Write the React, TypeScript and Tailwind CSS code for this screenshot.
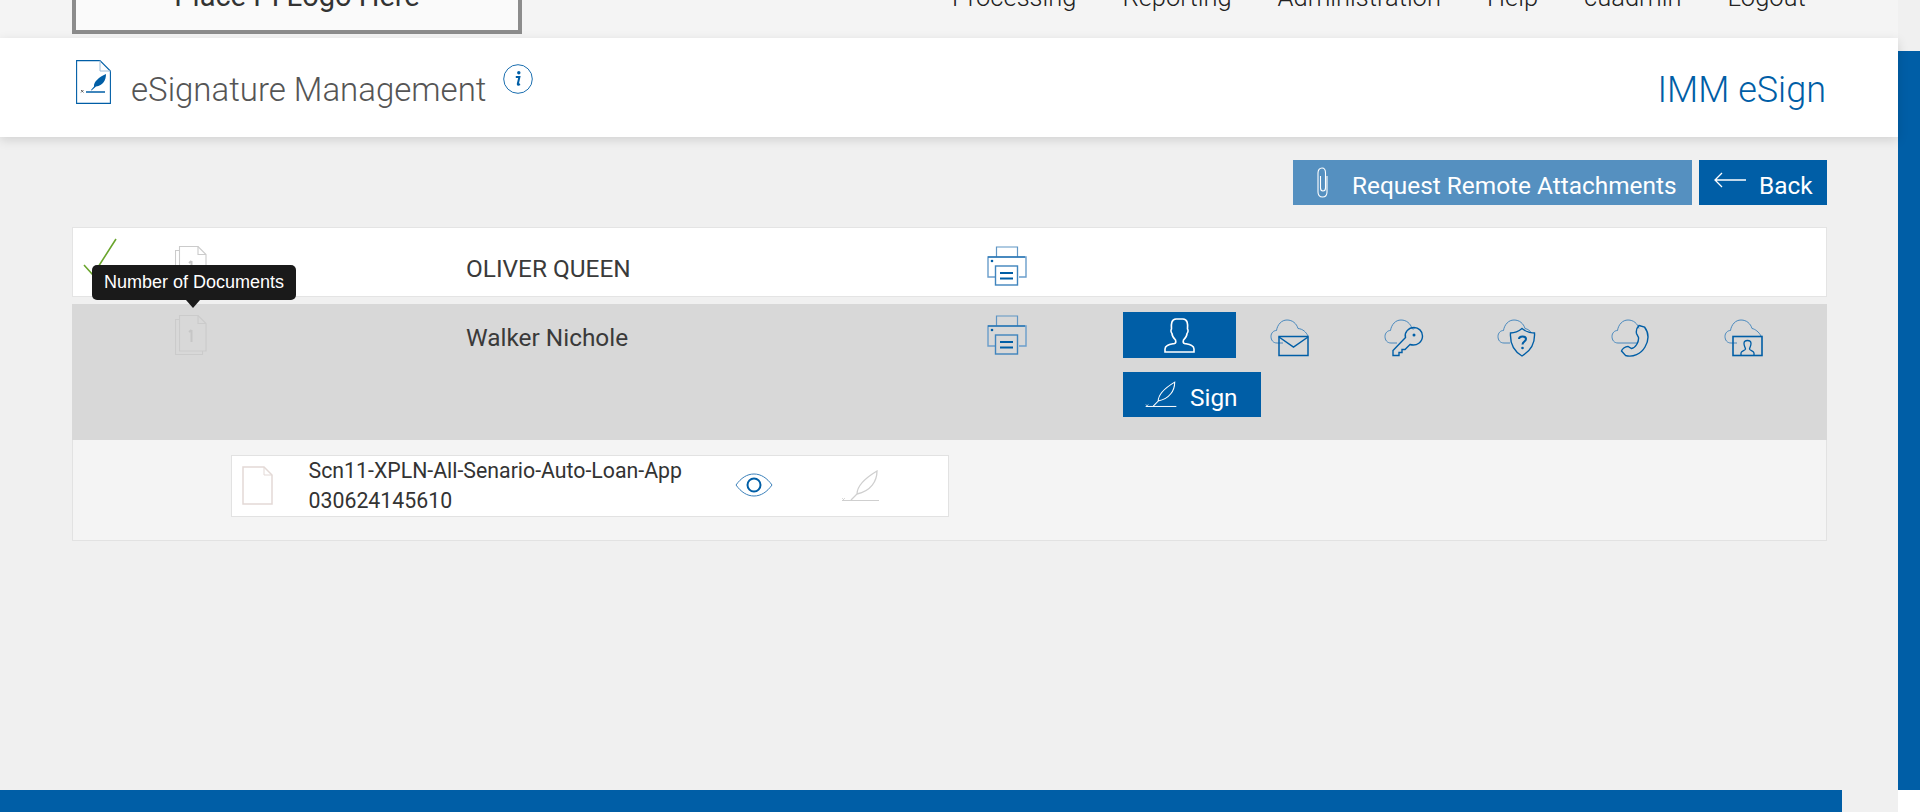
import React from 'react';

const BLUE = '#005ea6';

function PageIcon() {
  return (
    <svg width="35" height="44" viewBox="0 0 35 44" fill="none">
      <path d="M.6.600H24L34.400 11V43.400H.6Z" stroke={BLUE} strokeWidth="1.100" />
      <path d="M24 .6V11H34.400" stroke="#9dbcd8" strokeWidth="1" />
      <path d="M10 32H29" stroke={BLUE} strokeWidth="1.500" />
      <path d="M5 30L7.500 32.500M7.500 30L5 32.500" stroke="#555" strokeWidth="0.9" />
      <path d="M15 30L18 26.500C17.500 22 23 17 30 14C30 20.500 27 25.500 20 26.500L15.500 30.500Z" fill={BLUE} />
    </svg>
  );
}

function InfoIcon() {
  return (
    <svg width="30" height="30" viewBox="0 0 30 30" fill="none">
      <circle cx="15" cy="15" r="14.3" stroke={BLUE} strokeWidth="0.9" />
      <circle cx="15.800" cy="8.800" r="1.700" fill={BLUE} />
      <path d="M12.800 13H16.400L14.800 20C14.700 20.800 15.400 21 17 20.200" stroke={BLUE} strokeWidth="2" />
    </svg>
  );
}

function Clip() {
  return (
    <svg width="13" height="31" viewBox="0 0 13 31" fill="none" stroke="#fff" strokeWidth="1.100">
      <path d="M11 9V25C11 28 9.500 30 6.500 30C3.500 30 2 28 2 25V6C2 3 3.500 1 6 1C8.500 1 9.500 3 9.500 6V21C9.500 23 8.500 24 7 24C5.500 24 4.500 23 4.500 21V9" />
    </svg>
  );
}

function Arrow() {
  return (
    <svg width="32" height="16" viewBox="0 0 32 16" fill="none" stroke="#fff" strokeWidth="1.300">
      <path d="M1 8H32M8 1L1 8L8 15" />
    </svg>
  );
}

function DocStack() {
  return (
    <svg width="32" height="40" viewBox="0 0 32 40" fill="none" stroke="#cbcbcb" strokeWidth="1.100">
      <path d="M4.500 .5H23L31 8.500V36H4.500Z" />
      <path d="M23 .5V8.500H31" />
      <path d="M4.500 4.500H.5V39.500H27.500V36" />
      <path d="M16.500 15V27M14 17L16.500 15" strokeWidth="2" stroke="#c6c6c6" />
    </svg>
  );
}

function Printer() {
  return (
    <svg width="40" height="40" viewBox="0 0 40 40" fill="none">
      <path d="M9.500 11V1H30.500V11" stroke="#5f95c4" strokeWidth="1.200" />
      <path d="M8 31H1V11H39V31H32" stroke="#6a9dcb" strokeWidth="1.400" />
      <path d="M1 11H38" stroke={BLUE} strokeWidth="1.200" />
      <rect x="8.500" y="20" width="22" height="19" stroke="#3f84bd" strokeWidth="1.400" fill="none" />
      <path d="M13 27H26M13 32.500H26" stroke={BLUE} strokeWidth="2" />
      <circle cx="5" cy="15" r="1.300" fill={BLUE} />
    </svg>
  );
}

function Person() {
  return (
    <svg width="31" height="35" viewBox="0 0 31 35" fill="none" stroke="currentColor" strokeWidth="1.600">
      <path d="M1 34V31C1 27 6 26.500 10.500 25.500C12 25 12 23.500 11.500 22C9.500 20 8 18 8 15.500C7 14.500 6.500 12 7.500 11C7 6 7.500 1 12 1H19C23.500 1 24 6 23.500 11C24.500 12 24 14.500 23 15.500C23 18 21.500 20 19.500 22C19 23.500 19 25 20.500 25.500C25 26.500 30 27 30 31V34Z" />
    </svg>
  );
}

const cloud = 'M13 24H7C3 24 1 21 1 17.500C1 14 3.500 11.500 6.500 11.500C7.500 5.500 11.500 1 17 1C22.500 1 26.500 4.500 28 9.500';

function CloudMail() {
  return (
    <svg width="40" height="38" viewBox="0 0 40 38" fill="none">
      <path d={cloud} stroke="#3a80ba" strokeWidth="0.9" />
      <path d="M28 9.500C33 10 36 13 38 17" stroke="#3a80ba" strokeWidth="0.9" />
      <rect x="9" y="17.500" width="29" height="19" stroke={BLUE} strokeWidth="1.500" />
      <path d="M9 18L23.500 28L38 18" stroke={BLUE} strokeWidth="1.500" />
    </svg>
  );
}

function CloudKey() {
  return (
    <svg width="40" height="38" viewBox="0 0 40 38" fill="none">
      <path d={cloud} stroke="#3a80ba" strokeWidth="0.9" />
      <path d="M28 9.500C29 10 30 10.500 30.500 9" stroke="#3a80ba" strokeWidth="0.9" />
      <path d="M21.500 18.500L9 31.500V36.500H15V33.500H18V30.500H21L26 25.500C33 27.500 38.500 23 38.500 17C38.500 12 34.500 8.500 30 8.500C24.500 8.500 20 13.500 21.500 18.500Z" stroke={BLUE} strokeWidth="1.400" />
      <circle cx="30" cy="16" r="1.500" fill={BLUE} />
    </svg>
  );
}

function CloudShield() {
  return (
    <svg width="40" height="38" viewBox="0 0 40 38" fill="none">
      <path d={cloud} stroke="#3a80ba" strokeWidth="0.9" />
      <path d="M28 9.500C31 10 33 12 35 14" stroke="#3a80ba" strokeWidth="0.9" />
      <path d="M25 9.500C22 12 17 14 13.500 14C13 22 15 31 25 37C35 31 38 22 37.500 14C33 14 28 12 25 9.500Z" stroke={BLUE} strokeWidth="1.400" />
      <path d="M22 20C22 16.500 29 16.500 29 20C29 22.500 25.500 22.500 25.500 25.500" stroke={BLUE} strokeWidth="2" />
      <circle cx="25.500" cy="29" r="1.300" fill={BLUE} />
    </svg>
  );
}

function CloudPhone() {
  return (
    <svg width="40" height="38" viewBox="0 0 40 38" fill="none">
      <path d={cloud} stroke="#3a80ba" strokeWidth="0.9" />
      <path d="M13 24H27" stroke="#3a80ba" strokeWidth="0.9" />
      <path d="M28 6.500L33.500 8C38 14 38 21 34 28C30 35 22 38.500 14.500 36.500L10.500 32C11 30 14 27.500 17 27.500L20.500 29.500C24.500 29 28 23 27.500 18.500L25.500 14.500C25 12 26 8.500 28 6.500Z" stroke={BLUE} strokeWidth="1.400" />
    </svg>
  );
}

function CloudVideo() {
  return (
    <svg width="40" height="38" viewBox="0 0 40 38" fill="none">
      <path d={cloud} stroke="#3a80ba" strokeWidth="0.9" />
      <path d="M28 9.500C31 10 35 13 37 17" stroke="#3a80ba" strokeWidth="0.9" />
      <rect x="9" y="17.500" width="29" height="19" stroke={BLUE} strokeWidth="1.600" />
      <path d="M17 36V34C17 32 21.500 31.500 21.500 30C21 28 20 27 20 24.500C20 20.500 27 20.500 27 24.500C27 27 26 28 25.500 30C25.500 31.500 30 32 30 34V36" stroke={BLUE} strokeWidth="1.300" />
    </svg>
  );
}

function Feather({ color, small }: { color: string; small?: boolean }) {
  return (
    <svg width={small ? 40 : 33} height={small ? 32 : 27} viewBox="0 0 40 32" fill="none" stroke={color}>
      <path d="M1 30.500H38" strokeWidth="1.200" />
      <path d="M1 28L4 31M4 28L1 31" strokeWidth="0.8" />
      <path d="M10 30L16 24C16 15 26 7 36 1C36 11 30 21 16 24" strokeWidth="1.300" />
    </svg>
  );
}

function Eye() {
  return (
    <svg width="38" height="24" viewBox="0 0 38 24" fill="none">
      <path d="M1 12C6 5 12 1 19 1C26 1 32 5 37 12C32 19 26 23 19 23C12 23 6 19 1 12Z" stroke="#3a80ba" strokeWidth="1" />
      <circle cx="19" cy="12" r="6.500" stroke={BLUE} strokeWidth="2" />
    </svg>
  );
}

function FileIcon() {
  return (
    <svg width="31" height="39" viewBox="0 0 31 39" fill="none">
      <path d="M1 1H22L30 9V38H1Z" stroke="#e3d9d6" strokeWidth="1.500" />
      <path d="M22 1V9H30" stroke="#e3d9d6" strokeWidth="1" />
    </svg>
  );
}

const navItems = ['Processing', 'Reporting', 'Administration', 'Help', 'cuadmin', 'Logout'];
const cloudIcons = [CloudMail, CloudKey, CloudShield, CloudPhone, CloudVideo];

export default function App() {
  return (
    <div className="flex h-[812px] overflow-hidden bg-[#f0f0f0] font-['Roboto',sans-serif]">
      <div className="flex w-[1898px] flex-col">
        <div className="flex h-[38px] shrink-0 overflow-hidden bg-[#f4f4f4]">
          <div className="ml-[72px] flex h-[34px] w-[450px] items-end justify-center border-4 border-t-0 border-[#8c8c8c] bg-[#fafafa]">
            <span className="mb-[16px] text-[29px] leading-[36px] whitespace-nowrap text-[#333]">Place PI Logo Here</span>
          </div>
          <nav className="ml-[430px] flex h-[11px] items-end gap-[46px] text-[25.500px] leading-[28px] font-light whitespace-nowrap text-[#222]">
            {navItems.map((item) => (
              <span key={item}>{item}</span>
            ))}
          </nav>
        </div>

        <header className="relative flex h-[99px] shrink-0 bg-white pr-[72px] pl-[76px] shadow-[0_3px_10px_rgba(0,0,0,0.13)]">
          <div className="mt-[22px]">
            <PageIcon />
          </div>
          <h1 className="mt-[30px] ml-[20px] text-[33px] leading-[44px] font-light text-[#555]">eSignature Management</h1>
          <div className="mt-[26px] ml-[17px]">
            <InfoIcon />
          </div>
          <div className="mt-[29px] ml-auto text-[36px] leading-[46px] font-light text-[#005ea6]">IMM eSign</div>
        </header>

        <div className="mt-[23px] mr-[71px] flex shrink-0 justify-end gap-[7px]">
          <button className="flex h-[45px] w-[399px] items-center bg-[#5590c0] pl-[23px] text-[24.400px] text-white">
            <Clip />
            <span className="mt-[7px] ml-[23px]">Request Remote Attachments</span>
          </button>
          <button className="flex h-[45px] w-[128px] items-center bg-[#005ea6] pl-[15px] text-[24.400px] text-white">
            <span className="mb-[6px]">
              <Arrow />
            </span>
            <span className="mt-[7px] ml-[13px]">Back</span>
          </button>
        </div>

        <div className="relative mt-[22px] ml-[72px] w-[1755px]">
          <div className="grid h-[70px] grid-cols-[102px_291px_521px_1fr] border border-[#e4e4e4] bg-white">
            <div className="pt-[10px] pl-[10px]">
              <svg width="34" height="38" viewBox="0 0 34 38" fill="none">
                <path d="M1 27L10 37L33 1" stroke="#6aa52d" strokeWidth="1.600" />
              </svg>
            </div>
            <div className="pt-[18px]">
              <DocStack />
            </div>
            <div className="pt-[27px] text-[24.400px] leading-[28px] text-[#3a3a3a]">OLIVER QUEEN</div>
            <div className="pt-[18px]">
              <Printer />
            </div>
          </div>

          <div className="mt-[7px] grid h-[136px] grid-cols-[103px_291px_521px_136px_1fr] bg-[#d8d8d8]">
            <div />
            <div className="pt-[11px]">
              <DocStack />
            </div>
            <div className="pt-[20px] text-[24.400px] leading-[28px] text-[#3a3a3a]">Walker Nichole</div>
            <div className="pt-[11px]">
              <Printer />
            </div>
            <div className="pt-[8px]">
              <div className="flex">
                <div className="flex h-[46px] w-[113px] items-center justify-center bg-[#005ea6] text-white">
                  <Person />
                </div>
                {cloudIcons.map((Icon, i) => (
                  <div key={i} className="w-[113.500px] pt-[7px] pl-[34px]">
                    <Icon />
                  </div>
                ))}
              </div>
              <button className="mt-[14px] flex h-[45px] w-[138px] items-center bg-[#005ea6] pl-[22px] text-[24.400px] text-white">
                <Feather color="#fff" />
                <span className="mt-[7px] ml-[12px]">Sign</span>
              </button>
            </div>
          </div>

          <div className="h-[101px] border border-t-0 border-[#e2e2e2] bg-[#f4f4f4] pt-[15px] pl-[158px]">
            <div className="flex h-[62px] w-[718px] border border-[#e2e2e2] bg-white pl-[10px]">
              <div className="pt-[10px]">
                <FileIcon />
              </div>
              <div className="ml-[35.500px] w-[426px] text-[21.300px] leading-[30px] text-[#333]">
                <div>Scn11-XPLN-All-Senario-Auto-Loan-App</div>
                <div>030624145610</div>
              </div>
              <div className="pt-[17px]">
                <Eye />
              </div>
              <div className="ml-[68px] pt-[14px]">
                <Feather color="#cfcfcf" small />
              </div>
            </div>
          </div>

          <div className="absolute top-[38px] left-[20px] flex h-[35px] w-[204px] items-center justify-center rounded-[5px] bg-[#1a1a1a] font-['Liberation_Sans',sans-serif] text-[18px] text-white">
            Number of Documents
            <div className="absolute top-[35px] left-[94px] h-0 w-0 border-x-[7px] border-t-[8px] border-x-transparent border-t-[#1a1a1a]" />
          </div>
        </div>

        <div className="mt-auto h-[22px] w-[1842px] shrink-0 bg-[#005ea6]" />
      </div>

      <div className="flex w-[22px] flex-col">
        <div className="h-[51px] shrink-0" />
        <div className="h-[739px] shrink-0 bg-[#005ea6]" />
        <div className="flex-1 bg-white" />
      </div>
    </div>
  );
}
